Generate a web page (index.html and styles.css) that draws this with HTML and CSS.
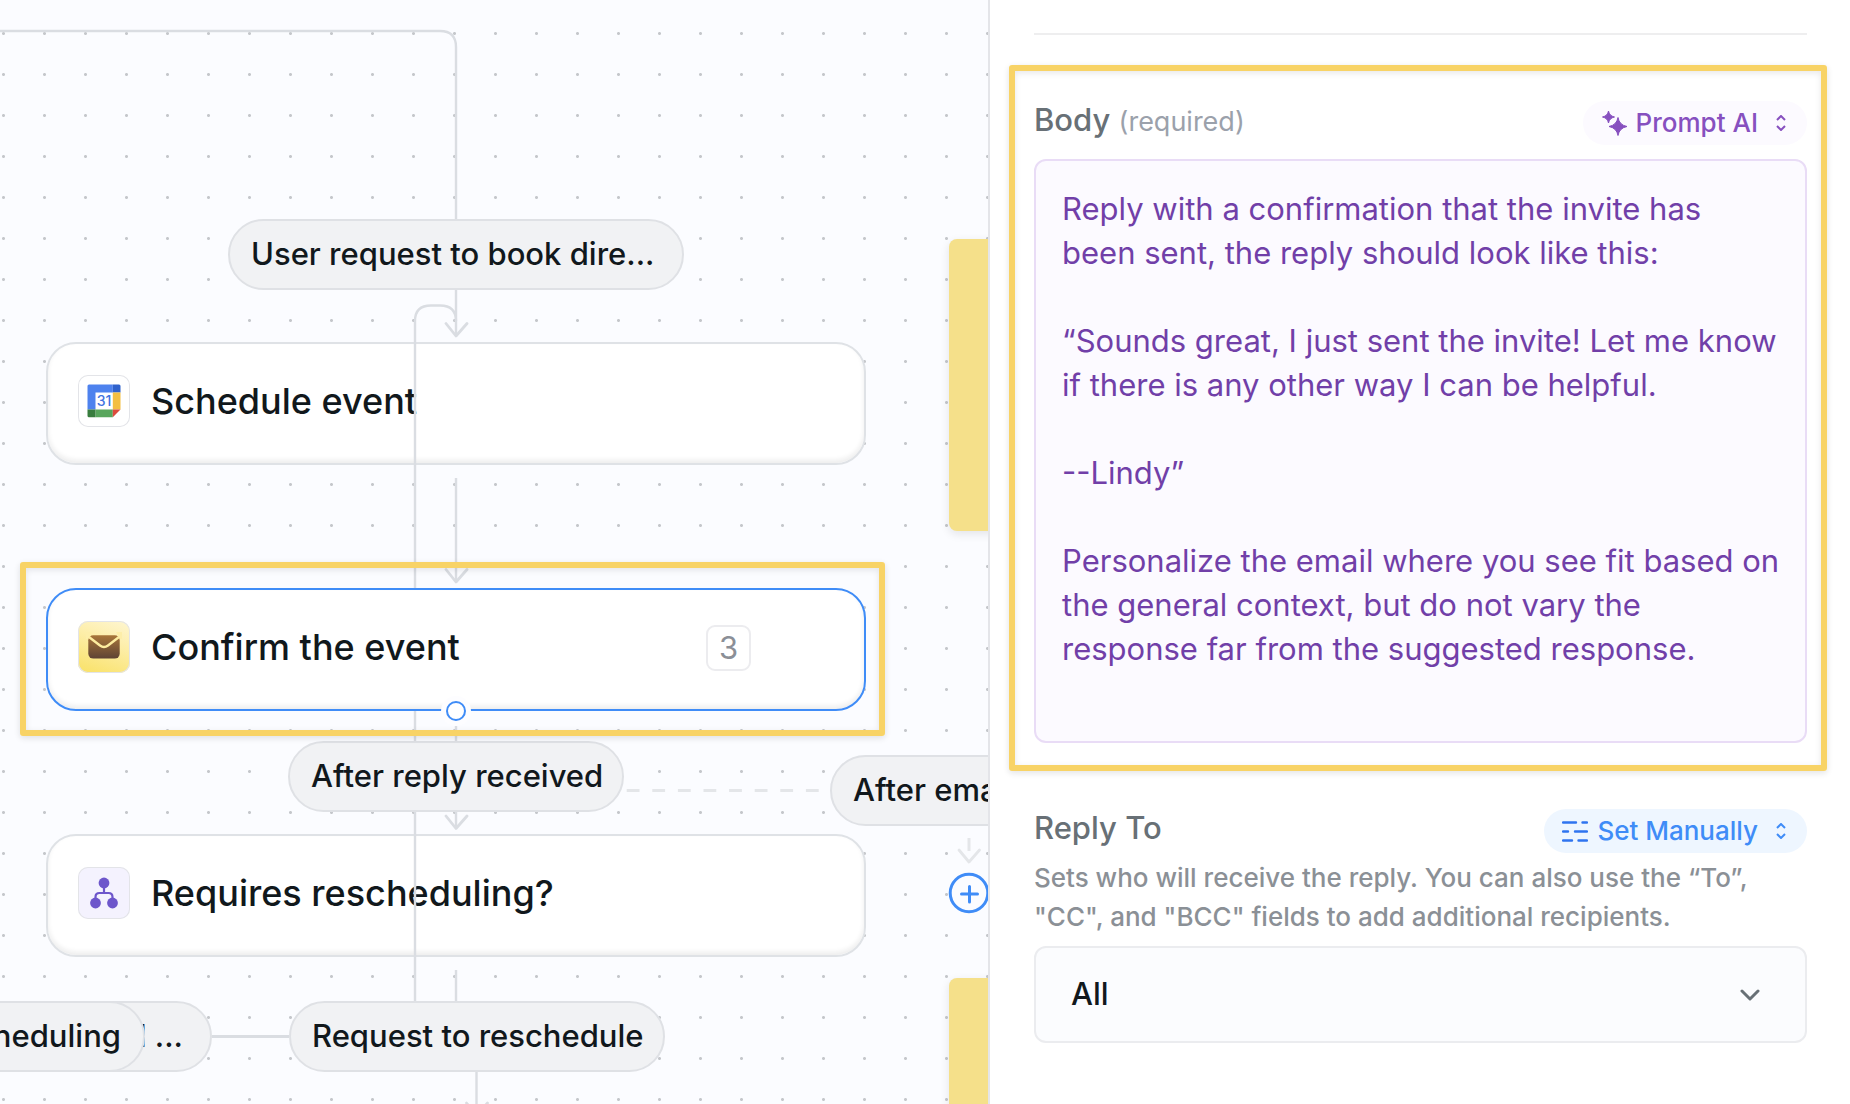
FILE: index.html
```html
<!DOCTYPE html>
<html lang="en">
<head>
  <meta charset="utf-8">
  <meta name="viewport" content="width=device-width, initial-scale=1">
  <title>Flow editor</title>
  <link rel="stylesheet" href="styles.css">
</head>
<body>
  <div class="app">
    <main class="canvas">
      <article class="card card-schedule">
        <span class="card-icon">
          <svg viewBox="0 0 52 52" aria-hidden="true">
            <path d="M11 9.500H34.800V17.500H17.500V34.500H9.500V11A1.500 1.500 0 0 1 11 9.500Z" fill="#4e82ee"/>
            <path d="M34.800 9.500H41A1.500 1.500 0 0 1 42.500 11V17.500H34.800Z" fill="#2f62cc"/>
            <path d="M34.800 17.500H42.500V34.500H34.800Z" fill="#f3bf42"/>
            <path d="M17.500 34.500H34.800V42.300H17.500Z" fill="#58a65c"/>
            <path d="M9.500 34.500H17.500V42.300H11A1.500 1.500 0 0 1 9.500 40.800Z" fill="#387d3e"/>
            <path d="M34.800 34.500H42.500L34.800 42.300Z" fill="#dc4a3d"/>
            <text x="26" y="31" text-anchor="middle" class="cal-day">31</text>
          </svg>
        </span>
        <h2 class="card-title">Schedule event</h2>
      </article>

      <article class="card card-confirm">
        <span class="card-icon icon-mail">
          <svg viewBox="0 0 52 52" aria-hidden="true">
            <defs>
              <linearGradient id="mail" x1="0" y1="0" x2="0" y2="1">
                <stop offset="0" stop-color="#a9763a"/>
                <stop offset="1" stop-color="#5e4334"/>
              </linearGradient>
            </defs>
            <rect x="10.300" y="14.200" width="31.400" height="23.400" rx="5" fill="url(#mail)"/>
            <path d="M9 14.500L22 24.500Q26 27.500 30 24.500L43 14.500" fill="none" stroke="#fdec9f" stroke-width="2.400"/>
            <path d="M8 11H14L12 14.500L10 18L8 18ZM44 11H38L40 14.500L42 18H44Z" fill="#fdeea9"/>
          </svg>
        </span>
        <h2 class="card-title">Confirm the event</h2>
        <span class="badge">3</span>
        <span class="handle"></span>
      </article>

      <article class="card card-requires">
        <span class="card-icon icon-branch">
          <svg viewBox="0 0 52 52" aria-hidden="true">
            <g fill="#6d56cb">
              <circle cx="26" cy="16" r="5.400"/>
              <circle cx="17.500" cy="36" r="5.400"/>
              <circle cx="34.500" cy="36" r="5.400"/>
            </g>
            <path d="M26 18V26M17.500 34V30Q17.500 26 21.500 26H30.500Q34.500 26 34.500 30V34" fill="none" stroke="#6d56cb" stroke-width="2.200"/>
          </svg>
        </span>
        <h2 class="card-title">Requires rescheduling?</h2>
      </article>

      <svg class="edges" aria-hidden="true">
        <g fill="none" stroke="#dadde2" stroke-width="2.400">
          <path d="M0 31H440Q456 31 456 47V336"/>
          <path d="M415 1001V321Q415 305.500 431 305.500H440Q456 305.500 456 321"/>
          <path d="M456 478V582M456 726V828M456 970V1001M476.500 1072V1115"/>
          <path d="M212 1036.500H289" stroke-width="3"/>
          <path d="M446 323.500L456 336L467 323.500M446 569.500L456 582L467 569.500M446 816L456 828.500L467 816M466.500 1103L476.500 1115.500L487.500 1103" stroke-width="2.800" stroke-linecap="round" stroke-linejoin="round"/>
        </g>
        <g fill="none" stroke="#e4e6e9" stroke-width="3">
          <path d="M626.700 790.500H825" stroke-dasharray="12.800 12.800"/>
          <path d="M969 838V851"/>
          <path d="M959 850L969 862L979.500 850" stroke-linecap="round" stroke-linejoin="round" stroke-width="2.800"/>
        </g>
      </svg>

      <div class="pill pill-book">User request to book dire...</div>
      <div class="pill pill-reply">After reply received</div>
      <div class="pill pill-email">After email</div>
      <div class="pill pill-back">l ...</div>
      <div class="pill pill-front">rescheduling</div>
      <div class="pill pill-request">Request to reschedule</div>

      <button class="add" type="button" aria-label="Add step">
        <svg viewBox="0 0 42 42" aria-hidden="true">
          <circle cx="21" cy="21" r="18.800" fill="#fbfcff"/>
          <path d="M21.500 14.500V30M13.500 22H29.500" stroke-linecap="round"/>
        </svg>
      </button>
      <div class="note note-top"></div>
      <div class="note note-bottom"></div>
      <div class="frame frame-canvas"></div>
    </main>

    <aside class="panel">
      <hr class="divider">

      <section class="field field-body">
        <div class="field-head">
          <label class="label" for="body">Body <span class="hint">(required)</span></label>
          <button class="mode mode-ai" type="button">
            <svg class="mode-icon" viewBox="0 0 26 26" aria-hidden="true">
              <path fill="currentColor" d="M7.500 1Q8.400 5.900 13.500 7Q8.400 8.100 7.500 13Q6.600 8.100 1.500 7Q6.600 5.900 7.500 1ZM17 7.500Q18.300 15 26 16.500Q18.300 18 17 25.500Q15.700 18 8 16.500Q15.700 15 17 7.500Z" stroke="currentColor" stroke-linejoin="round"/>
            </svg>
            Prompt AI
            <svg class="sort" viewBox="0 0 10 16" aria-hidden="true"><path d="M1 5L5 1L9 5M1 11L5 15L9 11"/></svg>
          </button>
        </div>
        <textarea class="prompt" id="body" spellcheck="false">Reply with a confirmation that the invite has been sent, the reply should look like this:

“Sounds great, I just sent the invite! Let me know if there is any other way I can be helpful.

--Lindy”

Personalize the email where you see fit based on the general context, but do not vary the response far from the suggested response.</textarea>
      </section>

      <section class="field">
        <div class="field-head">
          <label class="label" for="reply-to">Reply To</label>
          <button class="mode mode-manual" type="button">
            <svg class="mode-icon" viewBox="0 0 26 26" aria-hidden="true">
              <path d="M1 4.500H14M20.500 4.500H25M1 13.500H6M13 13.500H25M1 22.500H10M16.500 22.500H25" fill="none" stroke="#2f74f0" stroke-width="2.400" stroke-linecap="round"/>
            </svg>
            Set Manually
            <svg class="sort" viewBox="0 0 10 16" aria-hidden="true"><path d="M1 5L5 1L9 5M1 11L5 15L9 11"/></svg>
          </button>
        </div>
        <p class="help">Sets who will receive the reply. You can also use the “To”, "CC", and "BCC" fields to add additional recipients.</p>
        <div class="select-wrap">
          <select class="select" id="reply-to">
            <option>All</option>
            <option>Sender</option>
          </select>
          <svg class="chevron" viewBox="0 0 20 12" aria-hidden="true"><path d="M2 2L10 10L18 2"/></svg>
        </div>
      </section>
    </aside>
  </div>
</body>
</html>
```
FILE: styles.css
```css
* {
  box-sizing: border-box;
}

body {
  margin: 0;
  font-family: Inter, "Liberation Sans", sans-serif;
  color: #11181c;
}

button,
select,
textarea {
  font-family: inherit;
  margin: 0;
}

.app {
  display: grid;
  grid-template-columns: minmax(0, 1fr) 862px;
  height: 100vh;
}

/* Flow canvas */
.canvas {
  position: relative;
  overflow: hidden;
  background-color: #fbfcff;
  background-image: radial-gradient(circle, #c5c7cb 1px, transparent 2px);
  background-size: 41px 41px;
  background-position: -17px 13px;
}

.card {
  position: absolute;
  left: 46px;
  display: flex;
  align-items: flex-start;
  gap: 21px;
  width: 820px;
  height: 123px;
  padding: 31px 30px;
  border: 2px solid #dfe2e6;
  border-radius: 30px;
  background: #fff;
  box-shadow: inset 0 -3px 5px rgba(20, 24, 30, 0.08);
}

.card-schedule {
  top: 342px;
}

.card-confirm {
  top: 588px;
  z-index: 3;
  border-color: #3f8cf7;
}

.card-requires {
  top: 834px;
}

.card-icon {
  display: block;
  width: 52px;
  height: 52px;
  border-radius: 10px;
  background: #fff;
  box-shadow: inset 0 0 0 1px #e3e4e8;
}

.card-icon svg {
  display: block;
  border-radius: 10px;
}

.icon-mail {
  background: linear-gradient(20deg, #f9e165, #fdeea9 60%, #fef6d2);
}

.icon-branch {
  background: #f4f2fe;
}

.cal-day {
  fill: #3f73e0;
  font-size: 14px;
  font-weight: 500;
}

.card-title {
  margin: 0;
  font-size: 36px;
  line-height: 52px;
  font-weight: 450;
}

.badge {
  position: absolute;
  left: 658px;
  top: 35px;
  width: 45px;
  height: 46px;
  border: 2px solid #ececef;
  border-radius: 9px;
  color: #8b8f97;
  font-size: 31px;
  line-height: 42px;
  text-align: center;
}

.handle {
  position: absolute;
  left: 398px;
  bottom: -12px;
  width: 20px;
  height: 20px;
  border: 2px solid #3f8cf7;
  border-radius: 50%;
  background: #fff;
  box-shadow: 0 0 0 5px #fdfdff;
}

.edges {
  position: absolute;
  inset: 0;
  z-index: 2;
  width: 100%;
  height: 100%;
}

.pill {
  position: absolute;
  z-index: 3;
  height: 71px;
  padding: 0 19px 0 21px;
  border: 2px solid #dfe1e5;
  border-radius: 36px;
  background: #f1f2f4;
  font-size: 31px;
  line-height: 66px;
  font-weight: 450;
  white-space: nowrap;
}

.pill-book {
  left: 228px;
  top: 219px;
  width: 456px;
}

.pill-reply {
  left: 288px;
  top: 741px;
}

.pill-email {
  left: 830px;
  top: 755px;
}

.pill-back,
.pill-front,
.pill-request {
  top: 1001px;
}

.pill-back {
  left: -100px;
  width: 312px;
  padding-right: 27px;
  text-align: right;
}

.pill-front {
  left: -180px;
  width: 325px;
  padding-right: 22px;
  text-align: right;
}

.pill-request {
  left: 289px;
}

.add {
  position: absolute;
  left: 948px;
  top: 872px;
  width: 42px;
  height: 42px;
  padding: 0;
  border: 0;
  background: none;
}

.add svg {
  display: block;
  fill: none;
  stroke: #3f8cf7;
  stroke-width: 3;
}

.note {
  position: absolute;
  left: 949px;
  width: 240px;
  height: 292px;
  border-radius: 8px;
  background: #f5e08a;
  box-shadow: 0 3px 10px rgba(20, 24, 30, 0.1);
}

.note-top {
  top: 239px;
}

.note-bottom {
  top: 978px;
}

.frame,
.field-body::after {
  position: absolute;
  border: 6px solid #f8d366;
  border-radius: 3px;
  box-shadow: 0 2px 6px rgba(20, 24, 30, 0.12), inset 0 2px 6px rgba(20, 24, 30, 0.1);
  pointer-events: none;
}

.frame-canvas {
  left: 20px;
  top: 562px;
  z-index: 4;
  width: 865px;
  height: 174px;
}

/* Settings panel */
.panel {
  display: flex;
  flex-direction: column;
  gap: 66px;
  padding: 33px 43px 33px 44px;
  border-left: 2px solid #e4e5e9;
  background: #fff;
}

.divider {
  width: 100%;
  height: 2px;
  margin: 0;
  border: 0;
  background: #eeeeef;
}

.field-body {
  position: relative;
}

.field-body::after {
  content: "";
  inset: -36px -20px -28px -25px;
}

.field-head {
  display: flex;
  justify-content: space-between;
  align-items: flex-start;
}

.label {
  color: #687076;
  font-size: 31px;
  line-height: 38px;
  font-weight: 450;
}

.hint {
  color: #9ba1ab;
  font-size: 27px;
  font-weight: 400;
}

.mode {
  display: flex;
  align-items: center;
  height: 44px;
  padding: 0 21px 0 18px;
  border: 0;
  border-radius: 22px;
  font-size: 26px;
  font-weight: 450;
  line-height: 44px;
}

.mode-ai {
  background: #fcfaff;
  color: #8750bf;
}

.mode-manual {
  background: #eef6ff;
  color: #3f8cf7;
}

.mode-icon {
  width: 26px;
  height: 26px;
  margin-right: 9px;
}

.sort {
  width: 10px;
  height: 16px;
  margin-left: 18px;
  fill: none;
  stroke: currentColor;
  stroke-width: 2;
}

.prompt {
  display: block;
  width: 100%;
  height: 584px;
  margin-top: 14px;
  padding: 26px 24px 26px 26px;
  border: 2px solid #e9dcf6;
  border-radius: 12px;
  outline: 0;
  resize: none;
  background: #fcfaff;
  color: #713fa8;
  font-size: 31px;
  line-height: 44px;
}

.help {
  margin: 5px 0 10px;
  color: #8b9096;
  font-size: 26px;
  line-height: 39px;
  font-weight: 500;
}

.select-wrap {
  display: grid;
  align-items: center;
}

.select,
.chevron {
  grid-area: 1 / 1;
}

.select {
  width: 100%;
  height: 97px;
  padding: 0 35px 2px;
  border: 2px solid #ebecef;
  border-radius: 12px;
  appearance: none;
  background: #fbfcfe;
  color: #11181c;
  font-size: 31px;
  font-weight: 450;
}

.chevron {
  justify-self: end;
  width: 20px;
  height: 12px;
  margin-right: 47px;
  fill: none;
  stroke: #687076;
  stroke-width: 3;
  stroke-linecap: round;
  stroke-linejoin: round;
  pointer-events: none;
}
```
